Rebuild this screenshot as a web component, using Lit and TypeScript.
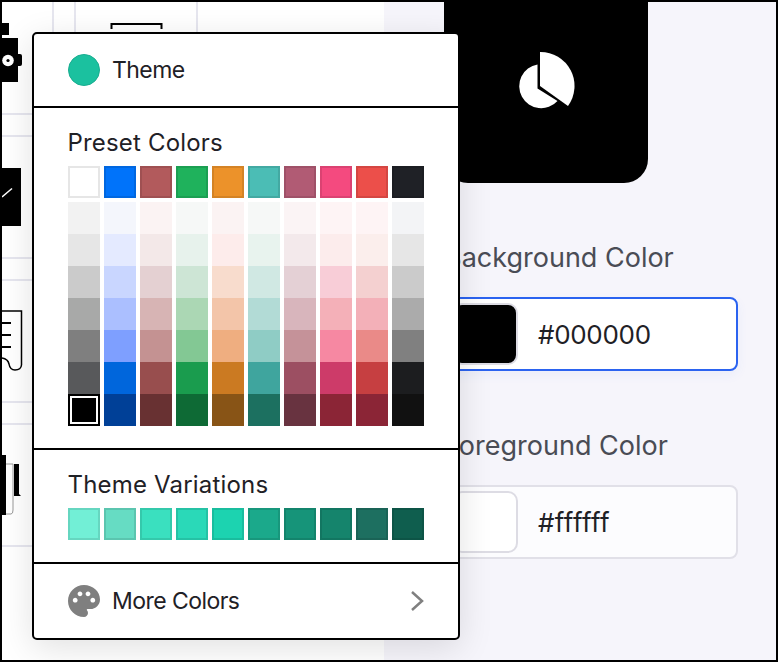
import { LitElement, html, css, svg } from "lit";
import { customElement } from "lit/decorators.js";

const PRESET = ["#ffffff","#0073fa","#b25a5c","#1fb25c","#ec922a","#4bbdb5","#b15b74","#f44a7f","#ec4f4a","#1f2126"];
const SHADES = [
  ["#f2f2f2","#f4f6fc","#fbf3f3","#f6f8f7","#fbf3f3","#f6f8f7","#fbf4f5","#fef4f5","#fef4f5","#f3f4f6"],
  ["#e6e6e6","#e4eaff","#f3e8e8","#e7f2ec","#fdeceb","#e8f3ee","#f3e9eb","#fcecec","#fbeeec","#e6e6e6"],
  ["#cbcbcb","#c9d6ff","#e4d0d2","#cde5d5","#f8dccd","#d0e8e3","#e4d0d5","#f8cdd7","#f4d0d0","#cbcbcb"],
  ["#a8a9a8","#abbfff","#d7b4b4","#abd7b4","#f3c5a9","#b2dbd6","#d8b5bc","#f4b0b8","#f3b0b8","#ababab"],
  ["#7f7f7f","#7e9fff","#c49292","#83c894","#efae80","#8fccc5","#c59299","#f688a2","#ea8a88","#808080"],
  ["#58595b","#0066dc","#984e4e","#1a9c4e","#cb7a22","#3fa59e","#9c4f62","#cd3b69","#c63f41","#1c1d1f"],
  ["#000000","#004097","#683132","#0e6a35","#885416","#1c7060","#683340","#8b2536","#8b2536","#111111"],
];
const VARIATIONS = ["#72efd6","#66dcc3","#3ae0bf","#2ad9b8","#1cd3b0","#1ba98b","#169479","#15846c","#1d6f60","#0f5e4e"];

const backdrop = svg`
  <g stroke="#e6e6ef" stroke-width="2" fill="none">
    <path d="M53 2V34M75 2V34M197 2V34" />
    <path d="M2 114H34M2 136H34M2 258H34M2 280H34M2 402H34M2 424H34M2 546H34" />
  </g>
  <path d="M111.500 29V24H161.500V29" fill="none" stroke="#000" stroke-width="2" />
  <rect x="2" y="23" width="7" height="12" />
  <rect x="2" y="38" width="16" height="44" />
  <rect x="2" y="54" width="20" height="12" rx="2" />
  <circle cx="8" cy="60.500" r="5.800" fill="#fff" />
  <circle cx="8" cy="60.500" r="1.600" />
  <rect x="2" y="168" width="19" height="58" />
  <path d="M2 197L12 188.500" stroke="#fff" stroke-width="1.500" />
  <g fill="none" stroke="#000" stroke-width="1.500">
    <path d="M2 311H21.500V365Q21 370 15 370Q10 370 9 364Q8 359 2 358" />
    <path d="M2 323H11M2 335H11M2 347H11" stroke-width="2" />
  </g>
  <path d="M6 464H13V510Q13 514 11 514H6" fill="none" stroke="#999" stroke-width="1" />
  <rect x="2" y="455" width="4" height="60" />
  <path d="M14 464H19V494L21 496H14Z" />
`;

@customElement("app-root")
export class AppRoot extends LitElement {
  static styles = css`
    :host {
      display: flex;
      position: relative;
      box-sizing: border-box;
      width: 778px;
      height: 662px;
      border: 2px solid #000;
      overflow: hidden;
      background: #fff;
      font-family: Inter, "Liberation Sans", sans-serif;
      color: #1f2126;
    }
    .canvas { flex: 0 0 382px; background: #fff; }
    .canvas svg { display: block; }
    .side {
      flex: 1;
      box-sizing: border-box;
      padding-left: 60px;
      padding-right: 38px;
      background: #f6f5fb;
      display: flex;
      flex-direction: column;
    }
    .tile {
      flex: none;
      box-sizing: border-box;
      width: 204px;
      height: 205px;
      margin-top: -24px;
      background: #000;
      border-radius: 24px;
      display: flex;
      align-items: center;
      justify-content: center;
    }
    .tile svg { display: block; }
    .label {
      font-size: 27px;
      line-height: 32px;
      color: #4a4c55;
      white-space: nowrap;
    }
    .bg-label { margin-top: 59px; }
    .fg-label { margin-top: 59px; }
    .field {
      box-sizing: border-box;
      height: 74px;
      margin-top: 23px;
      display: flex;
      align-items: center;
      gap: 20px;
      padding: 0 6px;
      border: 2px solid #e1e0e8;
      border-radius: 8px;
      background: #fcfcfe;
      font-size: 26px;
    }
    .field.focus {
      border-color: #2b63f0;
      background: #fff;
      box-shadow: 0 4px 12px rgba(43, 99, 240, 0.06);
    }
    .field .value { letter-spacing: -0.3px; }
    .field .light { letter-spacing: 0.4px; }
    .chip {
      box-sizing: border-box;
      width: 66px;
      height: 62px;
      border: 2px solid #dddce4;
      border-radius: 10px;
      background: #fff;
    }
    .chip.black { background: #000; }
    .popup {
      position: absolute;
      left: 30px;
      top: 30px;
      box-sizing: border-box;
      width: 428px;
      height: 608px;
      border: 2px solid #000;
      border-radius: 5px;
      background: #fff;
      box-shadow: 0 8px 34px rgba(0, 0, 0, 0.12);
      display: flex;
      flex-direction: column;
      font-size: 24px;
    }
    .row {
      display: flex;
      align-items: center;
      gap: 12px;
      padding: 0 34px;
      font-size: 23px;
      letter-spacing: -0.55px;
    }
    .theme { height: 72px; border-bottom: 2px solid #000; flex: none; }
    .dot {
      box-sizing: border-box;
      width: 32px;
      height: 32px;
      border-radius: 50%;
      background: #1bc19f;
      border: 1px solid #19ad90;
    }
    .section { padding: 0 34px; flex: none; }
    .preset { height: 340px; border-bottom: 2px solid #000; }
    .variations { height: 112px; border-bottom: 2px solid #000; }
    .title {
      height: 29px;
      line-height: 29px;
      margin: 20px 0 9px -0.5px;
      letter-spacing: 0.18px;
      white-space: nowrap;
    }
    .grid {
      display: grid;
      grid-template-columns: repeat(10, 32px);
      column-gap: 4px;
    }
    .first { margin-bottom: 4px; }
    .swatch {
      box-sizing: border-box;
      height: 32px;
    }
    .edged { border: 2px solid rgba(0, 0, 0, 0.1); }
    .first .swatch:first-child { border-color: #e6e6e6; }
    .selected {
      background: #000;
      border: 2px solid #000;
      box-shadow: inset 0 0 0 2px #fff;
    }
    .more { flex: 1; }
    .more .text { flex: 1; }
    .more svg { display: block; flex: none; }
    .palette { fill: #7f7f7f; }
    .chevron { fill: none; stroke: #808080; stroke-width: 2.5; }
  `;

  render() {
    return html`
      <div class="canvas">
        <svg width="382" height="658" viewBox="2 2 382 658">${backdrop}</svg>
      </div>
      <div class="side">
        <div class="tile">
          <svg width="60" height="60" viewBox="516 51 60 60">
            <path fill="#fff" d="M537.500 64.500V88.500L557.500 101A22 22 0 1 1 537.500 64.500Z" />
            <path fill="#fff" d="M540 52V86L568 106A34 34 0 0 0 540 52Z" />
          </svg>
        </div>
        <div class="label bg-label">Background Color</div>
        <div class="field focus"><div class="chip black"></div><span class="value">#000000</span></div>
        <div class="label fg-label">Foreground Color</div>
        <div class="field"><div class="chip"></div><span class="value light">#ffffff</span></div>
      </div>
      <div class="popup">
        <div class="row theme"><div class="dot"></div><span>Theme</span></div>
        <div class="section preset">
          <div class="title">Preset Colors</div>
          <div class="grid first">
            ${PRESET.map(
              (c) => html`<div class="swatch edged" style="background:${c}"></div>`
            )}
          </div>
          <div class="grid">
            ${SHADES.flat().map((c, i) =>
              i === 60
                ? html`<div class="swatch selected"></div>`
                : html`<div class="swatch" style="background:${c}"></div>`
            )}
          </div>
        </div>
        <div class="section variations">
          <div class="title">Theme Variations</div>
          <div class="grid">
            ${VARIATIONS.map(
              (c) => html`<div class="swatch edged" style="background:${c}"></div>`
            )}
          </div>
        </div>
        <div class="row more">
          <svg class="palette" width="32" height="32" viewBox="2 2 20 20">
            <path d="M12 2C6.49 2 2 6.49 2 12s4.49 10 10 10c1.38 0 2.5-1.12 2.5-2.5 0-.61-.23-1.2-.64-1.67-.08-.1-.13-.21-.13-.33 0-.28.22-.5.5-.5H16c3.31 0 6-2.69 6-6 0-4.96-4.49-9-10-9zm-5.500 11c-.83 0-1.500-.67-1.500-1.500S5.670 10 6.500 10s1.500.67 1.500 1.500S7.330 13 6.500 13zm3-4C8.670 9 8 8.330 8 7.500S8.670 6 9.500 6s1.500.67 1.500 1.500S10.330 9 9.500 9zm5 0c-.83 0-1.500-.67-1.500-1.500S13.670 6 14.500 6s1.500.67 1.500 1.500S15.330 9 14.500 9zm3 4c-.83 0-1.500-.67-1.500-1.500s.67-1.500 1.500-1.500 1.500.67 1.500 1.500-.67 1.500-1.500 1.500z" />
          </svg>
          <span class="text">More Colors</span>
          <svg class="chevron" width="14" height="22" viewBox="0 0 14 22"><path d="M2 2L12 11L2 20" /></svg>
        </div>
      </div>
    `;
  }
}
